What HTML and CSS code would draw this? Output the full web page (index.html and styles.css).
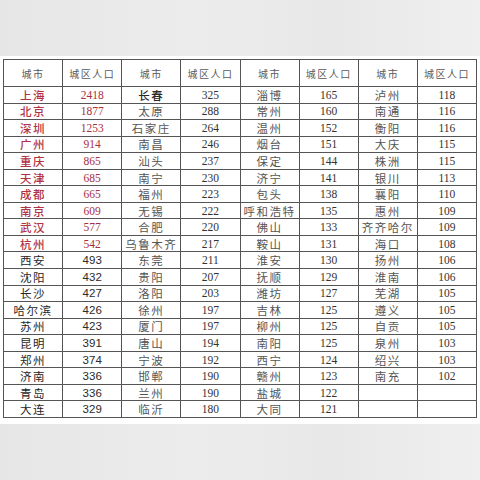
FILE: index.html
```html
<!DOCTYPE html>
<html lang="zh">
<head>
<meta charset="utf-8">
<title>城区人口</title>
<link rel="stylesheet" href="styles.css">
</head>
<body>
<div class="sheet">
<table class="pop">
<colgroup><col><col><col><col><col><col><col><col></colgroup>
<thead>
<tr><th>城市</th><th>城区人口</th><th>城市</th><th>城区人口</th><th>城市</th><th>城区人口</th><th>城市</th><th>城区人口</th></tr>
</thead>
<tbody>
<tr class="top"><td class="c1">上海</td><td class="n1">2418</td><td class="c1b">长春</td><td class="n">325</td><td class="c">淄博</td><td class="n">165</td><td class="c">泸州</td><td class="n">118</td></tr>
<tr class="top"><td class="c1">北京</td><td class="n1">1877</td><td class="c">太原</td><td class="n">288</td><td class="c">常州</td><td class="n">160</td><td class="c">南通</td><td class="n">116</td></tr>
<tr class="top"><td class="c1">深圳</td><td class="n1">1253</td><td class="c">石家庄</td><td class="n">264</td><td class="c">温州</td><td class="n">152</td><td class="c">衡阳</td><td class="n">116</td></tr>
<tr class="top"><td class="c1">广州</td><td class="n1">914</td><td class="c">南昌</td><td class="n">246</td><td class="c">烟台</td><td class="n">151</td><td class="c">大庆</td><td class="n">115</td></tr>
<tr class="top"><td class="c1">重庆</td><td class="n1">865</td><td class="c">汕头</td><td class="n">237</td><td class="c">保定</td><td class="n">144</td><td class="c">株洲</td><td class="n">115</td></tr>
<tr class="top"><td class="c1">天津</td><td class="n1">685</td><td class="c">南宁</td><td class="n">230</td><td class="c">济宁</td><td class="n">141</td><td class="c">银川</td><td class="n">113</td></tr>
<tr class="top"><td class="c1">成都</td><td class="n1">665</td><td class="c">福州</td><td class="n">223</td><td class="c">包头</td><td class="n">138</td><td class="c">襄阳</td><td class="n">110</td></tr>
<tr class="top"><td class="c1">南京</td><td class="n1">609</td><td class="c">无锡</td><td class="n">222</td><td class="c">呼和浩特</td><td class="n">135</td><td class="c">惠州</td><td class="n">109</td></tr>
<tr class="top"><td class="c1">武汉</td><td class="n1">577</td><td class="c">合肥</td><td class="n">220</td><td class="c">佛山</td><td class="n">133</td><td class="c">齐齐哈尔</td><td class="n">109</td></tr>
<tr class="top"><td class="c1">杭州</td><td class="n1">542</td><td class="c">乌鲁木齐</td><td class="n">217</td><td class="c">鞍山</td><td class="n">131</td><td class="c">海口</td><td class="n">108</td></tr>
<tr><td class="c2">西安</td><td class="n2">493</td><td class="c">东莞</td><td class="n">211</td><td class="c">淮安</td><td class="n">130</td><td class="c">扬州</td><td class="n">106</td></tr>
<tr><td class="c2">沈阳</td><td class="n2">432</td><td class="c">贵阳</td><td class="n">207</td><td class="c">抚顺</td><td class="n">129</td><td class="c">淮南</td><td class="n">106</td></tr>
<tr><td class="c2">长沙</td><td class="n2">427</td><td class="c">洛阳</td><td class="n">203</td><td class="c">潍坊</td><td class="n">127</td><td class="c">芜湖</td><td class="n">105</td></tr>
<tr><td class="c2">哈尔滨</td><td class="n2">426</td><td class="c">徐州</td><td class="n">197</td><td class="c">吉林</td><td class="n">125</td><td class="c">遵义</td><td class="n">105</td></tr>
<tr><td class="c2">苏州</td><td class="n2">423</td><td class="c">厦门</td><td class="n">197</td><td class="c">柳州</td><td class="n">125</td><td class="c">自贡</td><td class="n">105</td></tr>
<tr><td class="c2">昆明</td><td class="n2">391</td><td class="c">唐山</td><td class="n">194</td><td class="c">南阳</td><td class="n">125</td><td class="c">泉州</td><td class="n">103</td></tr>
<tr><td class="c2">郑州</td><td class="n2">374</td><td class="c">宁波</td><td class="n">192</td><td class="c">西宁</td><td class="n">124</td><td class="c">绍兴</td><td class="n">103</td></tr>
<tr><td class="c2">济南</td><td class="n2">336</td><td class="c">邯郸</td><td class="n">190</td><td class="c">赣州</td><td class="n">123</td><td class="c">南充</td><td class="n">102</td></tr>
<tr><td class="c2">青岛</td><td class="n2">336</td><td class="c">兰州</td><td class="n">190</td><td class="c">盐城</td><td class="n">122</td><td></td><td></td></tr>
<tr><td class="c2">大连</td><td class="n2">329</td><td class="c">临沂</td><td class="n">180</td><td class="c">大同</td><td class="n">121</td><td></td><td></td></tr>
</tbody>
</table>
</div>
</body>
</html>
```

FILE: styles.css
```css
html, body {
  margin: 0;
  padding: 0;
}
body {
  width: 480px;
  height: 480px;
  overflow: hidden;
  background: linear-gradient(90deg, #e6e6e6 0%, #ececec 40%, #e8e8e8 70%, #efefef 100%);
  font-family: "Liberation Serif", "Noto Sans CJK SC", serif;
}
.sheet {
  margin-top: 56px;
  background: #ffffff;
  padding: 3px 3px 6px 3px;
}
.pop {
  width: 474px;
  table-layout: fixed;
  border-collapse: collapse;
  border: 1px solid #4a4a4a;
}
.pop th,
.pop td {
  border: 1px solid #555555;
  padding: 0;
  text-align: center;
  vertical-align: middle;
  white-space: nowrap;
  overflow: hidden;
}
.pop thead tr {
  height: 27px;
}
.pop th {
  font-family: "Noto Sans CJK SC", sans-serif;
  font-weight: 400;
  font-size: 10px;
  letter-spacing: 1.5px;
  color: #5a5a5a;
}
.pop tbody tr {
  height: 16.55px;
}
.pop td {
  font-size: 11.5px;
  line-height: 14px;
}
.c, .c1, .c1b, .c2 {
  font-family: "Noto Sans CJK SC", sans-serif;
  font-size: 10px;
  letter-spacing: 1.5px;
}
.c {
  color: #555555;
}
.c1 {
  color: #b13344;
  font-size: 10.5px;
  font-weight: 500;
}
.c1b {
  color: #2a2a2a;
  font-weight: 500;
}
.c2 {
  color: #262626;
  font-size: 10.5px;
}
.n {
  color: #333333;
  font-family: "Liberation Serif", serif;
}
.n1 {
  color: #a82f40;
  font-family: "Liberation Serif", serif;
}
.n2 {
  color: #2a2a2a;
  font-family: "Liberation Sans", sans-serif;
  font-size: 10.5px;
}
```
